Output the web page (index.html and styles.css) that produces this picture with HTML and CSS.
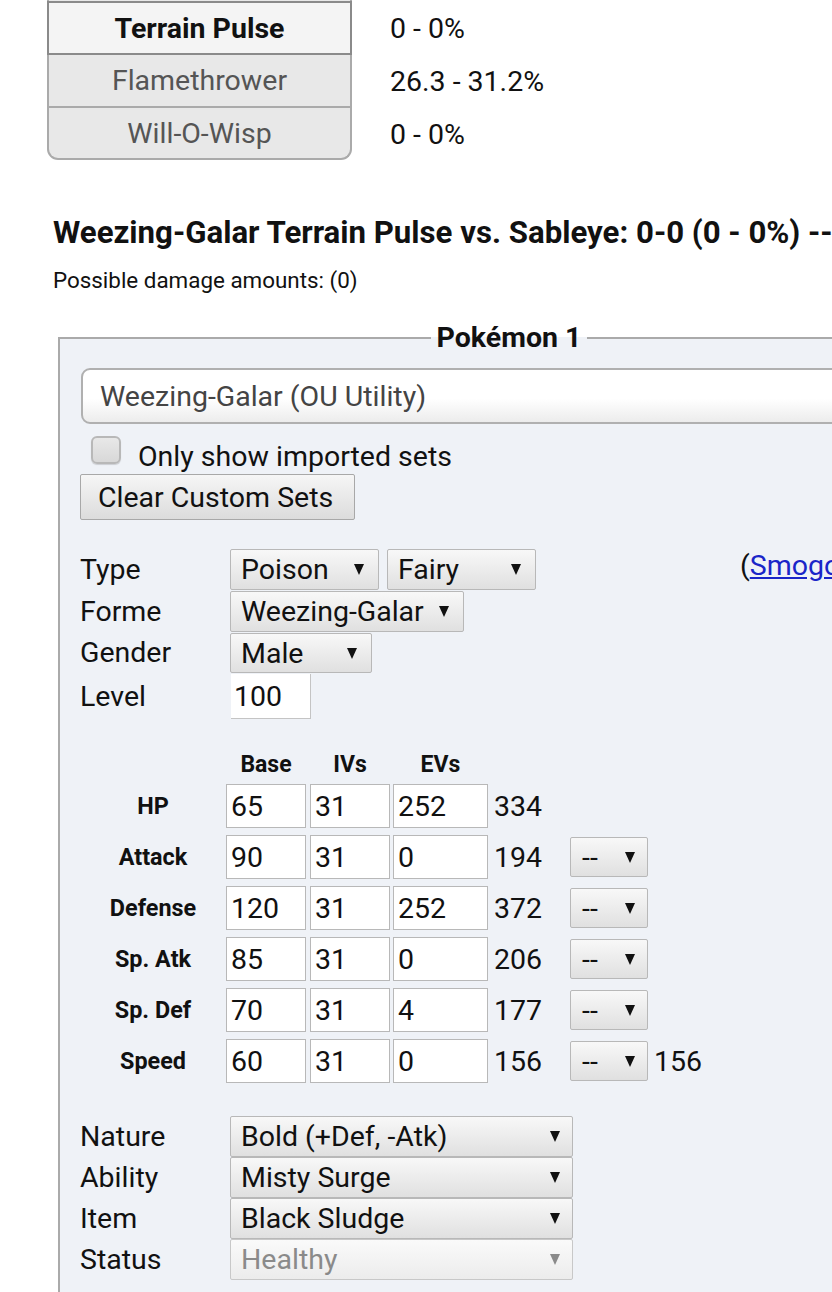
FILE: index.html
```html
<!DOCTYPE html>
<html lang="en">
<head>
<meta charset="utf-8">
<title>Damage Calculator</title>
<link rel="stylesheet" href="styles.css">
</head>
<body>
<div class="moves-area">
  <div class="move first"></div>
  <div class="result"></div>
  <div class="move sel">Terrain Pulse</div>
  <div class="result">0 - 0%</div>
  <div class="move">Flamethrower</div>
  <div class="result">26.3 - 31.2%</div>
  <div class="move last">Will-O-Wisp</div>
  <div class="result">0 - 0%</div>
</div>

<h2 class="main-result">Weezing-Galar Terrain Pulse vs. Sableye: 0-0 (0 - 0%) --</h2>
<p class="damage-values">Possible damage amounts: (0)</p>

<fieldset class="panel">
  <legend>Pokémon 1</legend>
  <div class="set-select">Weezing-Galar (OU Utility)</div>
  <div class="import-row">
    <span class="checkbox"></span>
    <span>Only show imported sets</span>
  </div>
  <div class="btn">Clear Custom Sets</div>

  <div class="info-grid">
    <div class="lbl">Type</div>
    <div class="ctrls">
      <span class="sel-box w149">Poison<i class="arrow"></i></span>
      <span class="sel-box w149 gap8">Fairy<i class="arrow"></i></span>
    </div>
    <div class="link-cell">(<a href="#">Smogon</a></div>
    <div class="lbl">Forme</div>
    <div class="ctrls"><span class="sel-box w234">Weezing-Galar<i class="arrow"></i></span></div>
    <div></div>
    <div class="lbl">Gender</div>
    <div class="ctrls"><span class="sel-box w142">Male<i class="arrow"></i></span></div>
    <div></div>
    <div class="lbl">Level</div>
    <div class="ctrls"><span class="level-input">100</span></div>
    <div></div>
  </div>

  <div class="stats">
    <div></div>
    <div class="hd w80">Base</div>
    <div class="hd w80">IVs</div>
    <div class="hd w95">EVs</div>
    <div></div><div></div><div></div>

    <div class="stat-lbl">HP</div>
    <div class="inp w80">65</div>
    <div class="inp w80">31</div>
    <div class="inp w95">252</div>
    <div class="total">334</div>
    <div></div><div></div>

    <div class="stat-lbl">Attack</div>
    <div class="inp w80">90</div>
    <div class="inp w80">31</div>
    <div class="inp w95">0</div>
    <div class="total">194</div>
    <div class="boost">--<i class="arrow"></i></div>
    <div></div>

    <div class="stat-lbl">Defense</div>
    <div class="inp w80">120</div>
    <div class="inp w80">31</div>
    <div class="inp w95">252</div>
    <div class="total">372</div>
    <div class="boost">--<i class="arrow"></i></div>
    <div></div>

    <div class="stat-lbl">Sp. Atk</div>
    <div class="inp w80">85</div>
    <div class="inp w80">31</div>
    <div class="inp w95">0</div>
    <div class="total">206</div>
    <div class="boost">--<i class="arrow"></i></div>
    <div></div>

    <div class="stat-lbl">Sp. Def</div>
    <div class="inp w80">70</div>
    <div class="inp w80">31</div>
    <div class="inp w95">4</div>
    <div class="total">177</div>
    <div class="boost">--<i class="arrow"></i></div>
    <div></div>

    <div class="stat-lbl">Speed</div>
    <div class="inp w80">60</div>
    <div class="inp w80">31</div>
    <div class="inp w95">0</div>
    <div class="total">156</div>
    <div class="boost">--<i class="arrow"></i></div>
    <div class="total">156</div>
  </div>

  <div class="misc-grid">
    <div class="lbl">Nature</div>
    <div class="sel-box wide">Bold (+Def, -Atk)<i class="arrow"></i></div>
    <div class="lbl">Ability</div>
    <div class="sel-box wide">Misty Surge<i class="arrow"></i></div>
    <div class="lbl">Item</div>
    <div class="sel-box wide">Black Sludge<i class="arrow"></i></div>
    <div class="lbl">Status</div>
    <div class="sel-box wide disabled">Healthy<i class="arrow"></i></div>
  </div>
</fieldset>
</body>
</html>
```

FILE: styles.css
```css
html, body {
  margin: 0;
  padding: 0;
  overflow: hidden;
  background: #ffffff;
}
body {
  font-family: Roboto, "Liberation Sans", sans-serif;
  font-size: 28.5px;
  color: #111;
  width: 832px;
}

/* moves list */
.moves-area {
  display: grid;
  grid-template-columns: 305px auto;
  grid-template-rows: 50px 54px 53px 52px;
  column-gap: 38px;
  margin: -49px 0 0 47px;
}
.move {
  box-sizing: border-box;
  display: flex;
  align-items: center;
  justify-content: center;
  background: #e8e8e8;
  color: #555;
  border-left: 2px solid #aaa;
  border-right: 2px solid #aaa;
  border-bottom: 2px solid #aaa;
}
.move.first {
  border-bottom: none;
}
.move.sel {
  background: #f4f4f4;
  color: #111;
  font-weight: bold;
  border: 2px solid #8a8a8a;
}
.move.last {
  border-radius: 0 0 11px 11px;
}
.result {
  display: flex;
  align-items: center;
}

/* heading */
.main-result {
  margin: 55px 0 0 53px;
  font-size: 31.2px;
  line-height: 36px;
  font-weight: bold;
  white-space: nowrap;
}
.damage-values {
  margin: 16px 0 0 53px;
  font-size: 22.4px;
  line-height: 26px;
}

/* panel */
.panel {
  box-sizing: border-box;
  margin: 28px 0 0 58px;
  width: 902px;
  padding: 0 21px 60px 21px;
  border: 2px solid #aaa;
  background: #eff2f7;
  min-width: 0;
}
.panel legend {
  margin: 0 auto;
  padding: 0 6px;
  font-weight: bold;
  line-height: 34px;
}
.set-select {
  box-sizing: border-box;
  margin-top: 13px;
  height: 56px;
  border: 2px solid #b0b0b0;
  border-radius: 9px;
  background: linear-gradient(#ffffff 0%, #ffffff 55%, #ececec 100%);
  color: #444;
  padding-left: 17px;
  display: flex;
  align-items: center;
}
.import-row {
  display: flex;
  align-items: flex-start;
  margin-top: 16px;
  line-height: 34px;
}
.checkbox {
  box-sizing: border-box;
  width: 30px;
  height: 28px;
  margin: -4px 0 0 10px;
  border: 2px solid #b8b8b8;
  border-radius: 6px;
  background: linear-gradient(#e8e8e8, #d8d8d8);
  box-shadow: 0 1px 1px rgba(0,0,0,0.15);
}
.import-row span:last-child {
  margin-left: 17px;
}
.btn {
  box-sizing: border-box;
  width: 275px;
  height: 46px;
  margin-left: -1px;
  border: 1.5px solid #a8a8a8;
  border-radius: 2px;
  background: linear-gradient(#f6f6f6, #dcdcdc);
  display: flex;
  align-items: center;
  padding-left: 17px;
}

/* info grid */
.info-grid {
  display: grid;
  grid-template-columns: 150px 510px auto;
  grid-template-rows: 41px 41px 40px 45px;
  row-gap: 1px;
  margin-top: 29px;
  margin-left: -1px;
}
.lbl {
  align-self: center;
  line-height: 34px;
}
.ctrls {
  display: flex;
  align-items: center;
}
.link-cell {
  line-height: 34px;
  white-space: nowrap;
}
.link-cell a {
  color: #1a25c8;
  text-decoration: underline;
}
.sel-box {
  box-sizing: border-box;
  height: 41px;
  display: flex;
  align-items: center;
  justify-content: space-between;
  padding: 0 14px 0 10px;
  border: 1.5px solid #b8b8b8;
  border-radius: 2px;
  background: linear-gradient(#f8f8f8, #e0e0e0);
}
.w149 { width: 149px; }
.w142 { width: 142px; height: 40px; }
.w234 { width: 234px; }
.gap8 { margin-left: 8px; }
.arrow {
  display: inline-block;
  width: 0;
  height: 0;
  border-left: 5px solid transparent;
  border-right: 5px solid transparent;
  border-top: 11px solid #111;
}
.level-input {
  box-sizing: border-box;
  width: 80px;
  height: 45px;
  margin-left: 1px;
  background: #fff;
  border-right: 1.5px solid #c4c4c4;
  border-bottom: 1.5px solid #c4c4c4;
  padding-left: 3px;
  display: flex;
  align-items: center;
}

/* stats */
.stats {
  display: grid;
  grid-template-columns: 146px 84px 83px 100px 77px 83px auto;
  grid-template-rows: 27px repeat(6, 44px);
  row-gap: 7px;
  margin-top: 31px;
  margin-left: -1px;
  align-items: center;
}
.hd {
  font-size: 23px;
  font-weight: bold;
  text-align: center;
  line-height: 25px;
  align-self: end;
}
.w80 { width: 80px; }
.w95 { width: 95px; }
.stat-lbl {
  font-size: 23.4px;
  font-weight: bold;
  text-align: center;
}
.inp {
  box-sizing: border-box;
  height: 44px;
  background: #fff;
  border: 1.5px solid #b8b8b8;
  padding-left: 4px;
  display: flex;
  align-items: center;
}
.total {
  padding-left: 1px;
}
.boost {
  box-sizing: border-box;
  width: 78px;
  height: 40px;
  display: flex;
  align-items: center;
  justify-content: space-between;
  padding: 0 12px 0 11px;
  border: 1.5px solid #b8b8b8;
  border-radius: 2px;
  background: linear-gradient(#f8f8f8, #e0e0e0);
}

/* nature etc */
.misc-grid {
  display: grid;
  grid-template-columns: 150px 343px;
  margin-top: 33px;
  margin-left: -1px;
}
.sel-box.wide {
  width: 343px;
  padding-right: 12px;
}
.sel-box.disabled {
  color: #8a8a8a;
  background: linear-gradient(#fafafa, #ececec);
  border-color: #c8c8c8;
}
.sel-box.disabled .arrow {
  border-top-color: #8a8a8a;
}
```
